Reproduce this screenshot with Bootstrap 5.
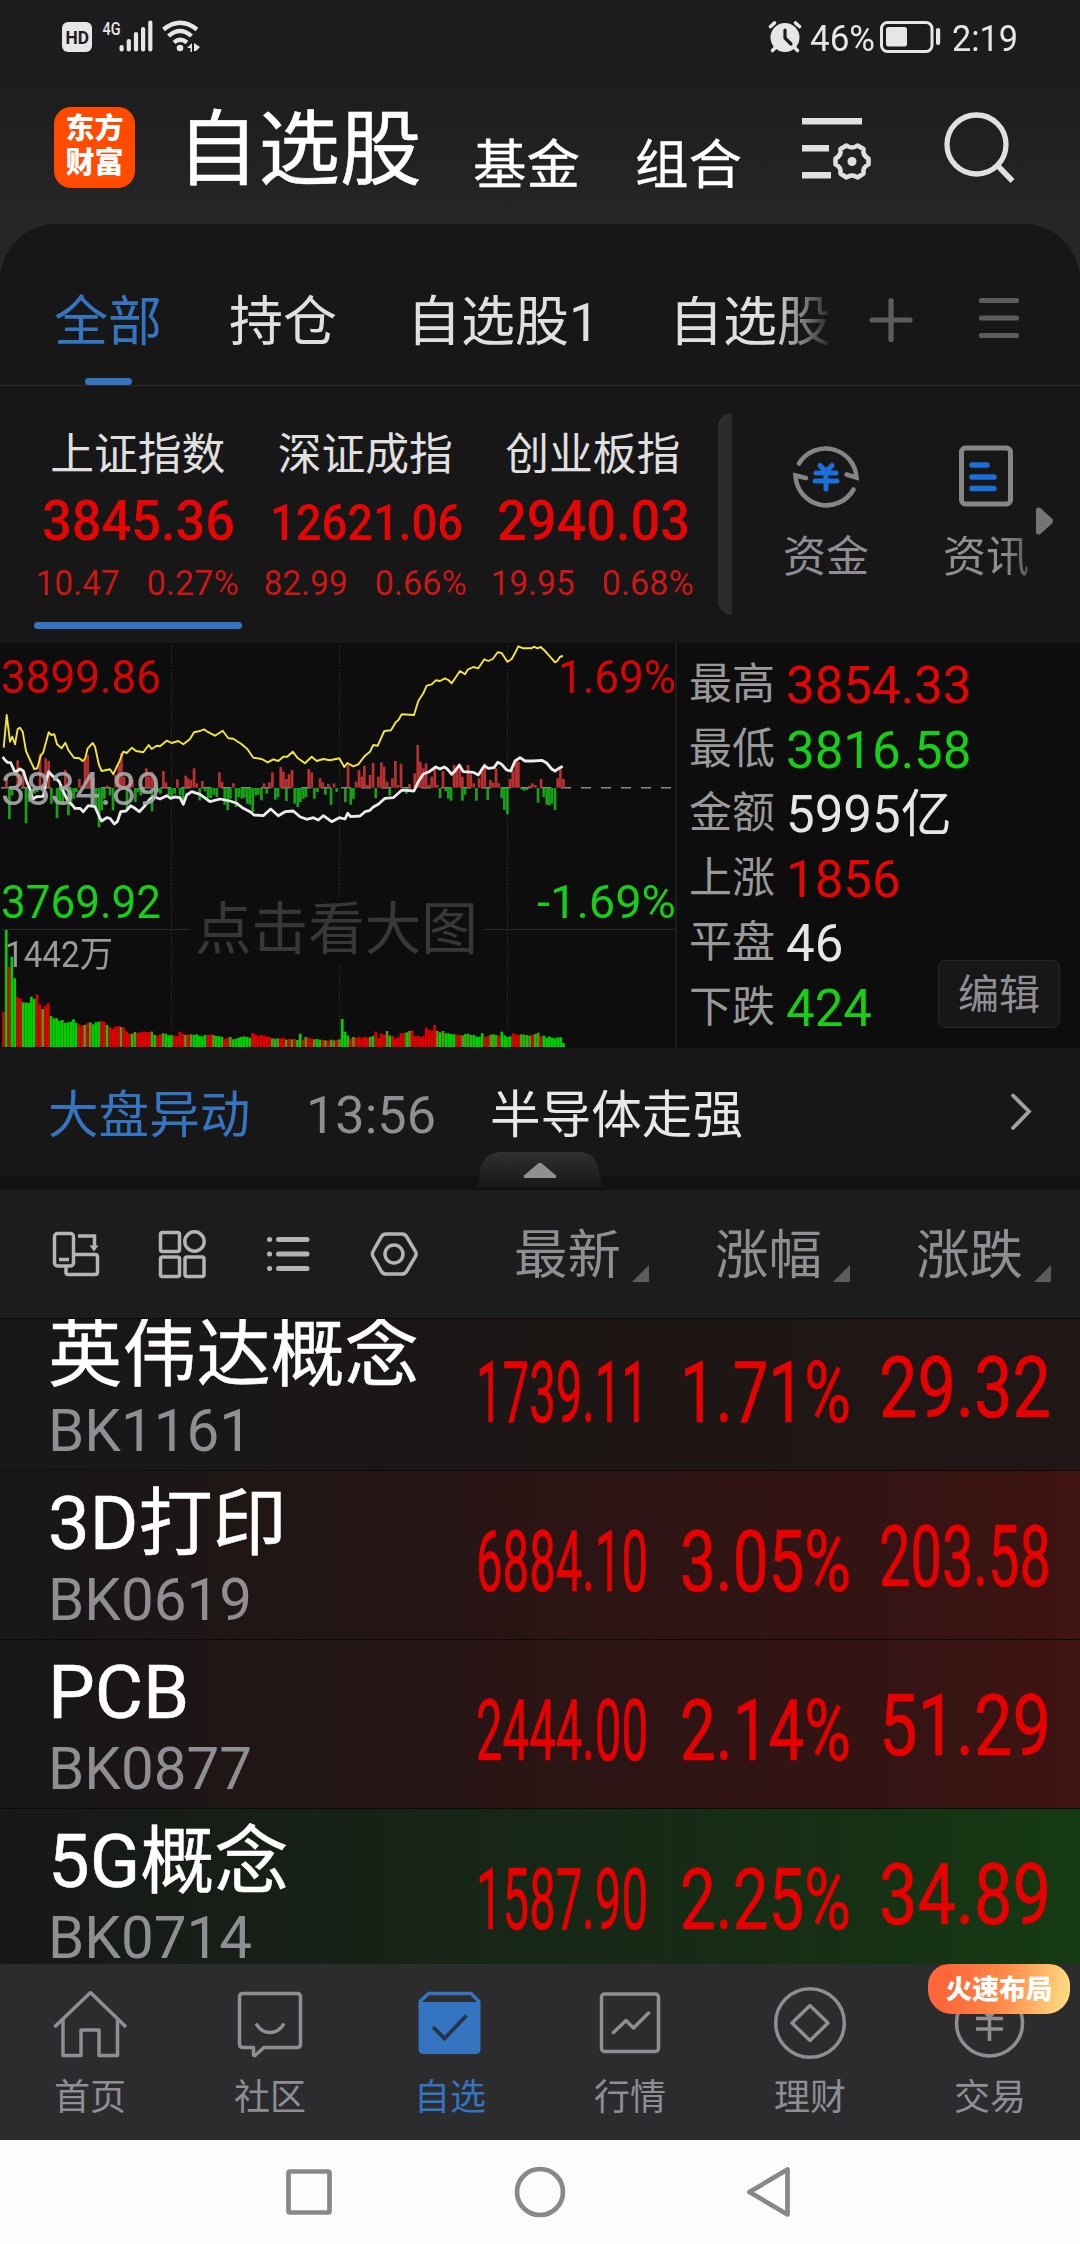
<!DOCTYPE html>
<html lang="zh-CN">
<head>
<meta charset="utf-8">
<meta name="viewport" content="width=device-width, initial-scale=1">
<title>自选股</title>
<link href="https://cdn.jsdelivr.net/npm/bootstrap@5.3.0/dist/css/bootstrap.min.css" rel="stylesheet">
<style>
:root{--ink:#e0e0e0;--dim:#8e8e93;--blue:#3474c0;--up:#e60505;--down:#17cf17}
html,body{width:1080px;height:2244px;overflow:hidden}
body{background:#171717;color:var(--ink);font-family:Roboto,"Noto Sans CJK SC",sans-serif;line-height:1;letter-spacing:0}
svg{display:block;flex:none}
.lh{line-height:1;white-space:nowrap}
.up{color:var(--up)}.down{color:var(--down)}.dim{color:var(--dim)}.blue{color:var(--blue)}
[data-fit]{display:inline-block;transform-origin:0 50%;white-space:nowrap;line-height:1}
.top-area{height:280px;background:linear-gradient(#1c1c1e 70px,#262626 224px)}
.status{height:75px;padding:0 0 0 62px;color:#e6e6e6;font-size:36px}
.titlebar{height:149px;padding-left:54px}
.app-logo{width:81px;height:81px;margin-top:32px;border-radius:17px;background:#ff4a00;color:#fff;font-weight:900;font-size:29px;line-height:33.5px;padding-top:6px}
.t-main{font-size:81.5px;color:#fff;margin:35px 0 0 42px;width:243px;-webkit-text-stroke:.5px #fff}
.t-sub{font-size:53.5px;color:#fff;margin-top:63.5px;-webkit-text-stroke:.3px #fff}
.sheet{margin-top:-56px;background:#171717;border-radius:56px 56px 0 0}
.tabs{height:162px;padding:72px 0 0 54px;border-bottom:1px solid #2b2b2b;font-size:54px}
.tab-line{width:47px;height:7px;border-radius:4px;background:var(--blue);margin:28px 0 0 31px}
.fade-tab{width:166px;overflow:hidden;-webkit-mask-image:linear-gradient(90deg,#000 105px,transparent 166px);mask-image:linear-gradient(90deg,#000 105px,transparent 166px)}
.indices{height:257px}
.idx{width:227.5px}
.idx-name{font-size:43.8px;margin-top:48px}
.idx-val{height:42px;margin-top:22.5px;font-weight:500}
.idx-sub{font-size:35px;margin-top:24px;color:#d01515}
.idx-bar{width:208px;height:7px;border-radius:4px;background:var(--blue);margin-top:21px}
.grip{width:14px;height:202px;margin-top:27px;background:#2c2c2e;border-radius:14px 0 0 14px}
.quick{font-size:43px;color:var(--dim)}
.chart-zone{height:405px;background:#0d0d0d}
.chart-box{width:677px;height:405px;border-right:2px solid #1d1d1d}
.cl{position:absolute;line-height:1;white-space:nowrap}
.stats{padding:17px 0 0 12px}
.stat{height:64.6px}
.stat-k{font-size:43px;color:#999;width:97px;padding-top:3px}
.stat-v{font-size:51px}
.edit-btn{position:absolute;left:938px;top:317px;width:122px;height:68px;border:1px solid #272727;border-radius:7px;background:#171717;color:var(--dim);font-size:41px;padding:0;line-height:68px}
.news{height:128px;font-size:50.6px;padding-left:48px}
.band{height:14px;background:#111}
.pull{position:absolute;left:477px;top:104px}
.colhead{height:129px;background:#1c1c1c;border-bottom:1px solid #0b0b0b;padding-left:40px}
.colhead .lbl{font-size:53.5px;color:var(--dim)}
.list{height:645px;overflow:hidden}
.stock{height:169px;border-bottom:1px solid #0b0b0b;padding-left:48px;flex:none}
.stock:first-child{margin-top:-17px}
.s-name{font-size:74.2px;color:#fff;margin-top:16px;-webkit-text-stroke:.5px #fff}
.s-code{font-size:59px;color:var(--dim);margin-top:8.3px}
.s-num{font-size:86px;color:#e60000;-webkit-text-stroke:.7px #e60000}
.bg-a{background:linear-gradient(90deg,#181818,#1d1615 60%,#211616)}
.bg-b{background:linear-gradient(90deg,#171717,#2a1414 50%,#341413 82%,#3f1311)}
.bg-c{background:linear-gradient(90deg,#171717,#172417 40%,#163014 80%,#153b13)}
.dock{height:176px;background:#2c2c2e;color:var(--dim);font-size:36px}
.dock .item{width:180px;padding-top:20px}
.promo{position:absolute;left:928px;top:0;width:142px;height:50px;border-radius:21px 21px 24px 24px;background:linear-gradient(100deg,#ff6639 15%,#ff8c4a 55%,#ffd880 95%);color:#fff;font-weight:900;font-size:26.8px;line-height:52px;text-align:center}
.sysnav{height:104px;background:#fcfcfc}
</style>
<script src="https://cdn.jsdelivr.net/npm/bootstrap@5.3.0/dist/js/bootstrap.bundle.min.js"></script>
</head>
<body>
<div class="top-area">
  <div class="status d-flex align-items-start">
    <svg width="140" height="75" viewBox="62 0 140 75" fill="#e6e6e6">
      <rect x="62" y="22" width="30" height="30" rx="6"/>
      <text x="65.5" y="44" font-size="19" font-weight="700" fill="#1c1c1e" textLength="23.5" lengthAdjust="spacingAndGlyphs">HD</text>
      <text x="102.5" y="34.5" font-size="18.5" font-weight="500" textLength="18" lengthAdjust="spacingAndGlyphs">4G</text>
      <rect x="119.500" y="45" width="4.200" height="6.500" rx="2"/><rect x="126.700" y="39" width="4.200" height="12.500" rx="2"/><rect x="133.900" y="32" width="4.200" height="19.500" rx="2"/><rect x="141" y="27" width="4.200" height="24.500" rx="2"/><rect x="148.200" y="20.500" width="4.200" height="31" rx="2"/>
      <g fill="none" stroke="#e6e6e6" stroke-width="4.300"><path d="M163.500 29.500Q180 16 197 29.500"/><path d="M168.500 36Q180 26 191.500 36"/><path d="M174 42.500Q180 37 187 42.500"/></g>
      <circle cx="180" cy="48" r="3.300"/><path d="M187 48l5-5v9h-1.500v-4zM194 43l6 4-4 4h-2z"/>
    </svg>
    <svg width="37" height="75" viewBox="767 0 37 75" style="margin-left:565px">
      <circle cx="785" cy="37.500" r="14.500" fill="#e6e6e6"/><g stroke="#e6e6e6" stroke-width="3.600" stroke-linecap="round"><path d="M770.500 26.500l4-3.500M799.500 26.500l-4-3.500M775 48l-2.500 2.500M795 48l2.500 2.500"/></g><path d="M785 30v8l6 6" fill="none" stroke="#1c1c1e" stroke-width="3.200" stroke-linecap="round"/>
    </svg>
    <span data-fit="65" style="margin-top:20.500px;margin-left:6px">46%</span>
    <svg width="63" height="75" viewBox="879 0 63 75" style="margin-left:4px"><rect x="881.500" y="22.500" width="50.500" height="29" rx="6" fill="none" stroke="#e6e6e6" stroke-width="3"/><rect x="886" y="27" width="21" height="19.500" rx="2.500" fill="#e6e6e6"/><rect x="936" y="28" width="4.200" height="17" rx="2" fill="#e6e6e6"/></svg>
    <span data-fit="66" style="margin-top:20.500px;margin-left:10px">2:19</span>
  </div>
  <div class="titlebar d-flex align-items-start">
    <div class="app-logo text-center">东方<br>财富</div>
    <div class="t-main lh">自选股</div>
    <div class="t-sub lh" style="margin-left:53px;width:107px">基金</div>
    <div class="t-sub lh" style="margin-left:55px;width:107px">组合</div>
    <svg width="80" height="149" viewBox="795 75 80 149" fill="#e0e0e0" style="margin-left:54px">
      <path d="M801 118h60v6.500h-60zM801 145h27v6.500h-27zM801 172h29v6.500h-29z"/>
      <path d="M845.500 145.500Q851 149.500 856.500 145.500L862.500 149Q861.500 155.500 867.500 158.500V164.500Q861.500 167 862.500 173.500L856.500 177.500Q851 173.500 845.500 177.500L839.500 173.500Q840.500 167 834.500 164.500V158.500Q840.500 155.500 839.500 149Z" fill="none" stroke="#e0e0e0" stroke-width="4.600" stroke-linejoin="round"/><circle cx="851" cy="161.500" r="4.500"/>
    </svg>
    <svg width="80" height="149" viewBox="938 75 80 149" fill="none" stroke="#e0e0e0" style="margin-left:63px"><ellipse cx="975.500" cy="144.500" rx="29.500" ry="29.500" stroke-width="5.300"/><path d="M997 166l14.500 15" stroke-width="5.500"/></svg>
  </div>
</div>
<div class="sheet position-relative">
  <div class="tabs d-flex align-items-start">
    <div style="width:175px"><div class="blue lh">全部</div><div class="tab-line"></div></div>
    <div class="lh" style="width:178px">持仓</div>
    <div class="lh" style="width:262px">自选股1</div>
    <div class="lh fade-tab">自选股2</div>
    <svg width="44" height="46" viewBox="869 295 44 46" stroke="#5c5c5c" stroke-width="5.200" stroke-linecap="round" style="margin-left:34px"><path d="M872 319h38M891 299.500v39"/></svg>
    <svg width="42" height="46" viewBox="978 295 42 46" stroke="#5c5c5c" stroke-width="5.200" stroke-linecap="round" style="margin-left:65px"><path d="M981.500 299.500h35M981.500 317h35M981.500 334.500h35"/></svg>
  </div>
  <div class="indices d-flex" style="padding-left:24px">
    <div class="idx d-flex flex-column align-items-center"><div class="idx-name lh">上证指数</div><div class="idx-val up d-flex align-items-center"><span data-fit="193" style="font-size:56px;margin-left:2px">3845.36</span></div><div class="idx-sub lh d-flex justify-content-between" style="width:203px"><span data-fit="84">10.47</span><span data-fit="92">0.27%</span></div><div class="idx-bar"></div></div>
    <div class="idx d-flex flex-column align-items-center"><div class="idx-name lh">深证成指</div><div class="idx-val up d-flex align-items-center"><span data-fit="193" style="font-size:50px;margin:3px 0 0 2px">12621.06</span></div><div class="idx-sub lh d-flex justify-content-between" style="width:203px"><span data-fit="84">82.99</span><span data-fit="92">0.66%</span></div></div>
    <div class="idx d-flex flex-column align-items-center"><div class="idx-name lh">创业板指</div><div class="idx-val up d-flex align-items-center"><span data-fit="193" style="font-size:56px;margin-left:2px">2940.03</span></div><div class="idx-sub lh d-flex justify-content-between" style="width:203px"><span data-fit="84">19.95</span><span data-fit="92">0.68%</span></div></div>
    <div class="grip" style="margin-left:11.500px"></div>
    <div class="quick d-flex flex-column align-items-center" style="width:188px;padding-top:56px">
      <svg width="70" height="70" viewBox="791 443 70 70" fill="none"><g stroke="#858585" stroke-width="4.600" stroke-linecap="round" stroke-linejoin="miter"><path d="M799 464.500A31 31 0 0 1 856.500 478.500L846.500 475.500"/><path d="M853.500 490.500A31 31 0 0 1 795.500 476.500L806 479"/></g><path d="M820 466.500l6 6 6-6M816 474h20M815 482h22M826 473v17" stroke="#1b6fd8" stroke-width="5" stroke-linecap="round"/></svg>
      <div class="lh" style="margin-top:24px">资金</div>
    </div>
    <div class="quick d-flex flex-column align-items-center" style="width:132px;padding-top:56px">
      <svg width="62" height="70" viewBox="955 443 62 70" fill="none"><rect x="961.500" y="449" width="49" height="56" rx="4" stroke="#858585" stroke-width="5"/><path d="M972 466h15M972 478h22M972 489.500h22" stroke="#1b6fd8" stroke-width="5.500" stroke-linecap="round"/></svg>
      <div class="lh" style="margin-top:24px;-webkit-mask-image:linear-gradient(90deg,#000 70%,#0008)">资讯</div>
    </div>
    <svg width="20" height="32" viewBox="1035 505 20 32" fill="#757575" style="margin:119px 0 0 -17px"><path d="M1036 510q0-3 3-2.500 1 0 2 1l11 10q2 2.500 0 5l-11 10q-1 1-2 1-3 .5-3-2.500z"/></svg>
  </div>
</div>
<div class="chart-zone d-flex position-relative">
  <div class="chart-box position-relative">
    <svg id="chart" width="675" height="405" viewBox="0 0 675 405"></svg>
    <span class="cl up" style="left:1px;top:12px;font-size:45.500px;opacity:.92" data-fit="160">3899.86</span>
    <span class="cl" style="left:1px;top:124px;font-size:45.500px;color:#aaa;opacity:.9" data-fit="160">3834.89</span>
    <span class="cl down" style="left:1px;top:237px;font-size:45.500px" data-fit="160">3769.92</span>
    <span class="cl up" style="left:558px;top:12px;font-size:45.500px;opacity:.92" data-fit="118">1.69%</span>
    <span class="cl down" style="left:537px;top:237px;font-size:45.500px" data-fit="139">-1.69%</span>
    <span class="cl" style="left:5px;top:294px;font-size:36px;color:#999" data-fit="108">1442万</span>
    <span class="cl" style="left:190px;top:252px;width:293px;height:70px;background:#0d0d0d;color:#373737;font-size:56.600px;padding:7px 0 0 5px">点击看大图</span>
  </div>
  <div class="stats">
    <div class="stat d-flex align-items-start"><span class="stat-k lh">最高</span><span class="stat-v lh up">3854.33</span></div>
    <div class="stat d-flex align-items-start"><span class="stat-k lh">最低</span><span class="stat-v lh down">3816.58</span></div>
    <div class="stat d-flex align-items-start"><span class="stat-k lh">金额</span><span class="stat-v lh" style="color:#e6e6e6">5995亿</span></div>
    <div class="stat d-flex align-items-start"><span class="stat-k lh">上涨</span><span class="stat-v lh up">1856</span></div>
    <div class="stat d-flex align-items-start"><span class="stat-k lh">平盘</span><span class="stat-v lh" style="color:#e6e6e6">46</span></div>
    <div class="stat d-flex align-items-start"><span class="stat-k lh">下跌</span><span class="stat-v lh down">424</span></div>
  </div>
  <button class="btn edit-btn" type="button">编辑</button>
</div>
<div class="position-relative">
  <div class="news d-flex align-items-start">
    <span class="lh blue" style="width:258px;margin-top:43px">大盘异动</span>
    <span class="dim" style="margin-top:42px;font-size:52px" data-fit="130">13:56</span>
    <span class="lh" style="color:#e8e8e8;margin:43px 0 0 54px;width:518px">半导体走强</span>
    <svg width="26" height="44" viewBox="1008 1090 26 44" fill="none" stroke="#a0a0a0" stroke-width="3.800" stroke-linecap="round" style="margin-top:42px"><path d="M1013 1095.500l16 16-16 16.500"/></svg>
  </div>
  <div class="band"></div>
  <svg class="pull" width="126" height="36" viewBox="477 1152 126 36"><defs><linearGradient id="pg" x1="0" y1="0" x2="0" y2="1"><stop offset="0" stop-color="#303030"/><stop offset="1" stop-color="#171717"/></linearGradient></defs><path d="M477.500 1187C481 1172 479 1152 502 1152H579C600 1152 598 1172 602.500 1187Z" fill="url(#pg)"/><path d="M525 1178q-2-.5-1-2.500l14-12q2-1.500 4 0l14 12q1 2-1 2.500z" fill="#909090"/></svg>
</div>
<div class="colhead d-flex align-items-start">
  <svg width="390" height="128" viewBox="40 1190 390 128" fill="none" stroke="#b4b4b4" stroke-width="3.500">
    <rect x="54.500" y="1233.500" width="19" height="32.500" rx="3"/><path d="M59 1259.500h10M66 1267v5.500q0 2 2.500 2h26.500q2.500 0 2.500-2.500v-15q0-2.500-2.500-2.500h-20M78 1236h16.500v10"/><path d="M89.500 1245.500h9l-4.500 6z" fill="#b4b4b4" stroke="none"/>
    <rect x="160.500" y="1232.500" width="19" height="19" rx="2"/><circle cx="194.500" cy="1241.500" r="9.700"/><rect x="160.500" y="1257" width="19" height="19.500" rx="2"/><rect x="185" y="1257" width="19" height="19.500" rx="2"/>
    <g stroke-linecap="round" stroke-width="5"><path d="M278.500 1239.500h28.500M278.500 1254h28.500M278.500 1268.500h28.500M269.500 1239.500h.1M269.500 1254h.1M269.500 1268.500h.1"/></g>
    <path d="M386 1234h16q3 0 4.500 2.500l9 15q1.200 2.500 0 5l-9 15q-1.500 2.500-4.500 2.500h-16q-3 0-4.500-2.500l-8.500-15q-1.200-2.500 0-5l8.500-15q1.500-2.500 4.500-2.500z"/><circle cx="394" cy="1254" r="9"/>
  </svg>
  <div class="d-flex" style="margin:39px 0 0 84px"><span class="lbl lh" style="width:118px">最新</span><svg width="17" height="17" style="margin-top:36px"><path d="M17 0v17H0z" fill="#5c5c5f"/></svg></div>
  <div class="d-flex" style="margin:39px 0 0 66px"><span class="lbl lh" style="width:118px">涨幅</span><svg width="17" height="17" style="margin-top:36px"><path d="M17 0v17H0z" fill="#5c5c5f"/></svg></div>
  <div class="d-flex" style="margin:39px 0 0 66px"><span class="lbl lh" style="width:118px">涨跌</span><svg width="17" height="17" style="margin-top:36px"><path d="M17 0v17H0z" fill="#5c5c5f"/></svg></div>
</div>
<div class="list d-flex flex-column" id="list"></div>
<div class="dock d-flex position-relative">
  <div class="item d-flex flex-column align-items-center"><svg width="80" height="80" viewBox="50 1984 80 80" fill="none" stroke="#8e8e93" stroke-width="3.500" stroke-linejoin="round"><path d="M54.500 2027L90.500 1992.500 126 2027M63 2019.500V2055.500H81V2030H99V2055.500H117.500V2019.500"/></svg><span class="lh" style="margin-top:16px">首页</span></div>
  <div class="item d-flex flex-column align-items-center"><svg width="80" height="80" viewBox="230 1984 80 80" fill="none" stroke="#8e8e93" stroke-width="3.500" stroke-linejoin="round"><path d="M243 1993.500h54q3.500 0 3.500 3.500v47q0 3.500-3.500 3.500h-33l-8.500 7.500q-2 1.500-2-1.500v-6h-10.500q-3.500 0-3.500-3.500v-47q0-3.500 3.500-3.500z"/><path d="M256 2023.500q5 9 14 9t14-9"/></svg><span class="lh" style="margin-top:16px">社区</span></div>
  <div class="item d-flex flex-column align-items-center blue"><svg width="80" height="80" viewBox="410 1984 80 80"><path d="M419.500 2002L428.500 1993.500H471L479.500 2002" fill="none" stroke="#3474c0" stroke-width="3.500"/><path d="M418.500 2002h62v47q0 5-5 5h-52q-5 0-5-5z" fill="#3474c0"/><path d="M433 2027l11.500 11.500 22-23" fill="none" stroke="#25344a" stroke-width="3.800"/></svg><span class="lh" style="margin-top:16px">自选</span></div>
  <div class="item d-flex flex-column align-items-center"><svg width="80" height="80" viewBox="590 1984 80 80" fill="none" stroke="#8e8e93" stroke-width="3.500" stroke-linejoin="round" stroke-linecap="round"><rect x="601.500" y="1994" width="57" height="57.500" rx="3"/><path d="M613.500 2032.500L626 2020.500 633.500 2028 648.500 2013"/></svg><span class="lh" style="margin-top:16px">行情</span></div>
  <div class="item d-flex flex-column align-items-center"><svg width="80" height="80" viewBox="770 1984 80 80" fill="none" stroke="#8e8e93" stroke-width="3.500" stroke-linejoin="round"><circle cx="810" cy="2023" r="34.300"/><path d="M810 2005.500l18 17.500-18 17.500-18-17.500z"/></svg><span class="lh" style="margin-top:16px">理财</span></div>
  <div class="item d-flex flex-column align-items-center"><svg width="80" height="80" viewBox="950 1984 80 80" fill="none" stroke="#8e8e93" stroke-width="3.500"><circle cx="989.500" cy="2023" r="33"/><path d="M976 2018.500h27M976 2029h27M989.500 2041v-24l-9-10M989.500 2017l9-10"/></svg><span class="lh" style="margin-top:16px">交易</span></div>
  <div class="promo">火速布局</div>
</div>
<div class="sysnav d-flex align-items-center">
  <svg width="1080" height="104" viewBox="0 2140 1080 104" fill="none" stroke="#888" stroke-width="4.700" stroke-linejoin="round"><rect x="288.500" y="2171.500" width="41" height="41" rx="1.500"/><circle cx="540" cy="2192" r="23"/><path d="M787.500 2169.500v45L749.500 2192z"/></svg>
</div>
<script>
// Watchlist rows
const rows=[['英伟达概念','BK1161','1739.11','1.71%','29.32','a'],['3D打印','BK0619','6884.10','3.05%','203.58','b'],['PCB','BK0877','2444.00','2.14%','51.29','b'],['5G概念','BK0714','1587.90','2.25%','34.89','c']];
document.getElementById('list').innerHTML=rows.map(r=>`<div class="stock bg-${r[5]} d-flex align-items-start"><div style="width:428px"><div class="s-name lh">${r[0]}</div><div class="s-code lh"><span data-fit="204">${r[1]}</span></div></div><div style="width:204px;margin-top:47.5px"><span class="s-num" data-fit="172">${r[2]}</span></div><div style="width:199px;margin-top:47.5px"><span class="s-num" data-fit="171">${r[3]}</span></div><div style="margin-top:42.5px"><span class="s-num" data-fit="172">${r[4]}</span></div></div>`).join('');

// Squeeze numbers to the width reserved for them
document.querySelectorAll('[data-fit]').forEach(e=>{const n=e.getBoundingClientRect().width,w=+e.dataset.fit;e.style.transform=`scaleX(${w/n})`;e.style.marginRight=(w-n)+'px'});

// Intraday chart; series are in thirds of a pixel with a 24-unit top inset
const Y='11,338 20,240 30,320 37,305 45,328 53,282 60,278 68,290 78,348 90,375 103,402 112,400 122,362 130,352 146,292 154,300 163,298 171,328 185,340 196,323 205,345 222,368 238,370 248,378 255,372 263,340 278,324 285,335 297,390 305,408 330,403 340,418 350,395 358,380 370,350 380,354 396,338 408,348 430,352 446,330 455,342 470,332 480,334 500,317 515,324 535,318 550,328 570,312 582,292 600,288 612,283 622,290 645,302 668,287 685,310 700,311 725,328 742,342 760,368 785,372 803,382 820,373 835,378 850,365 862,365 878,350 892,368 915,385 935,365 950,378 970,372 990,376 1018,370 1033,396 1042,384 1060,394 1075,388 1095,362 1110,350 1120,330 1133,332 1153,288 1173,286 1187,262 1195,256 1205,238 1242,240 1255,198 1270,175 1280,152 1295,148 1307,136 1320,138 1335,130 1345,135 1355,145 1380,108 1395,118 1403,104 1420,96 1435,100 1453,73 1465,78 1478,72 1493,52 1505,54 1522,80 1535,72 1547,50 1555,34 1570,40 1595,40 1602,35 1612,40 1622,36 1635,48 1650,65 1665,82 1672,78 1680,65 1689,63';
const W='8,366 15,375 22,382 32,383 45,412 60,402 70,408 80,440 90,462 98,492 110,485 130,484 138,440 146,410 160,425 178,440 190,470 205,500 215,508 225,520 240,520 250,530 265,512 285,515 300,550 305,558 320,548 330,550 343,567 352,560 362,530 378,528 392,512 405,520 418,530 435,512 450,492 462,485 480,492 500,482 512,490 525,486 540,488 550,508 560,480 575,470 600,478 630,500 660,492 690,498 710,505 730,520 750,530 762,540 790,542 812,522 835,542 855,530 880,528 900,545 920,553 940,548 955,555 970,542 995,560 1018,548 1035,552 1043,535 1052,545 1080,543 1095,530 1108,527 1120,516 1135,508 1155,490 1180,488 1205,466 1220,466 1242,468 1255,440 1270,417 1288,410 1307,396 1320,402 1333,396 1342,402 1355,418 1365,408 1378,390 1390,410 1420,412 1435,420 1453,392 1465,400 1482,398 1493,382 1505,388 1520,405 1532,408 1545,378 1560,368 1575,378 1600,378 1625,376 1640,384 1655,402 1665,408 1680,398 1688,394';
const B='19,425 53,376 69,408 120,358 137,370 146,378 196,405 238,432 246,455 255,375 263,360 271,425 280,430 322,452 347,420 356,390 364,354 372,425 389,425 397,435 439,400 447,425 456,410 464,430 490,408 498,442 532,433 557,422 565,430 573,435 582,400 590,445 607,438 658,412 666,440 700,445 792,445 808,442 817,412 842,396 850,410 859,432 867,418 876,405 926,402 935,412 960,430 968,442 985,447 1002,445 1044,390 1068,440 1077,405 1085,425 1093,392 1102,450 1110,420 1119,384 1135,425 1144,382 1152,395 1161,440 1177,430 1186,378 1194,450 1203,386 1228,447 1244,415 1253,330 1261,380 1270,400 1278,385 1287,450 1295,425 1304,400 1312,450 1329,408 1362,390 1370,395 1379,390 1387,425 1404,390 1412,418 1421,445 1437,430 1446,400 1454,385 1471,435 1479,443 1488,400 1496,445 1530,432 1538,405 1547,380 1555,380 1589,452 1597,445 1606,450 1623,432 1673,430 1681,400 1690,432 28,552 36,480 78,564 87,500 103,475 112,470 154,505 171,548 179,500 188,505 205,540 213,510 221,490 229,470 288,520 297,576 305,525 313,490 330,480 339,525 381,520 406,500 414,470 422,480 431,475 456,528 473,470 481,475 507,480 515,487 524,475 540,480 549,500 599,495 615,468 624,488 632,488 641,478 650,485 674,508 683,524 691,490 708,515 716,485 725,490 733,487 742,505 750,508 758,530 767,480 775,478 784,495 800,475 826,493 834,485 859,497 884,505 893,515 901,500 910,490 918,485 943,490 952,470 976,478 993,508 1010,470 1036,500 1052,508 1060,490 1127,488 1169,480 1219,475 1320,488 1337,468 1345,490 1353,496 1387,496 1395,478 1429,496 1463,494 1505,488 1513,524 1522,537 1564,462 1572,466 1580,464 1614,502 1631,485 1640,508 1648,510 1656,505 1665,524';
const V=[1130,885,995,965,1030,1085,1090,1102,1103,1104,1085,1092,1078,1108,1122,1112,1105,1143,1150,1150,1158,1155,1164,1162,1160,1153,1164,1168,1172,1170,1165,1162,1168,1162,1160,1158,1161,1170,1176,1182,1175,1173,1176,1178,1190,1196,1196,1191,1194,1192,1190,1191,1192,1190,1200,1202,1198,1195,1196,1201,1200,1202,1203,1190,1196,1200,1198,1198,1200,1198,1202,1204,1200,1200,1198,1200,1203,1204,1205,1212,1208,1206,1213,1212,1208,1206,1204,1206,1208,1194,1198,1202,1200,1202,1204,1206,1210,1212,1210,1211,1208,1214,1212,1213,1212,1215,1196,1214,1206,1208,1211,1213,1212,1214,1215,1216,1217,1214,1216,1215,1213,1152,1190,1202,1210,1206,1208,1206,1208,1206,1208,1206,1203,1190,1208,1196,1199,1188,1202,1203,1210,1206,1195,1194,1192,1188,1186,1203,1202,1206,1203,1178,1184,1187,1170,1188,1192,1188,1195,1195,1197,1198,1199,1199,1201,1197,1196,1200,1200,1205,1206,1195,1205,1203,1199,1198,1200,1203,1190,1201,1206,1204,1195,1198,1200,1198,1199,1200,1202,1199,1197,1193,1204,1202,1208,1205,1208,1210,1206,1204,1202,1203,1205,1204];
const C='rgrggrrgggggrrorrggggggggggrrorogggrrgrrrrorrrgorrrrrogrrogggrrrrorogggggrrogggrrogggggggrrrrrrrogorrororggrorroggroroororggrorrrrrogrrrrogrrrrrgorrrrrrrrrogoggggrrogogggggrrogorggggrrrgogorgorggggggggrrr'.split('');
C[121]=C[122]='g';
let s='<g stroke="#343434" stroke-dasharray="1.300 2">';
[171.5,339.5,507.5].forEach(x=>s+=`<path d="M${x} 3V389"/>`);
s+='</g><path d="M1 286.500H675" stroke="#292929"/><path d="M1 144.700H675" stroke="#8a8a8a" stroke-width="1.500" stroke-dasharray="10 10"/>';
B.split(' ').forEach(p=>{const[x,y]=p.split(',').map(Number),u=y<458;s+=`<rect x="${x/3-1.3}" y="${(u?y:459)/3-8}" width="2.700" height="${Math.abs(y-458)/3}" fill="${u?'#b83030':'#18a018'}"/>`});
for(let i=0;i<=200;i++){const x=(10.5+i*8.4)/3,y=i>=200?1224:i>=198?1207:V[i],c=C[i]||'r';s+=`<rect x="${x-1.4}" y="${y/3-8}" width="2.700" height="${(1236-y)/3}" fill="${c=='r'?'#e00000':c=='o'?'#5e921a':'#00d000'}"/>`}
const pts=t=>t.split(' ').map(p=>{const[x,y]=p.split(',');return(x/3).toFixed(1)+','+(y/3-8).toFixed(1)}).join(' ');
s+=`<polyline points="${pts(Y)}" fill="none" stroke="#f2e63c" stroke-width="1.900" stroke-linejoin="round"/><polyline points="${pts(W)}" fill="none" stroke="#ececec" stroke-width="2.800" stroke-linejoin="round"/>`;
document.getElementById('chart').innerHTML=s;
</script>
</body>
</html>
